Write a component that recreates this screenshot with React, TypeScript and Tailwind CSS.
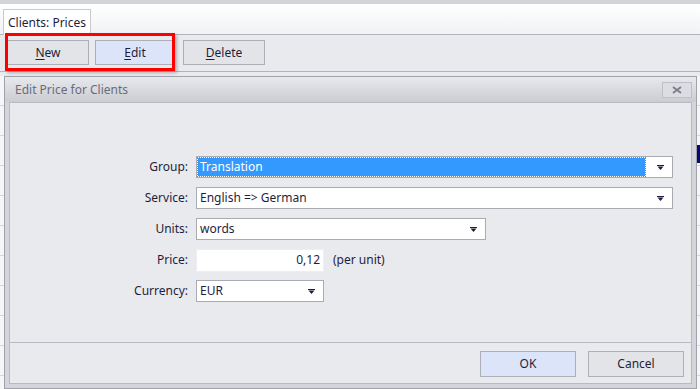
import React from 'react';

const font = { fontFamily: '"Noto Sans", "Open Sans", sans-serif' };

const Arrow: React.FC = () => (
  <svg width="7" height="5" viewBox="0 0 7 5" className="shrink-0">
    <rect x="0" y="0" width="7" height="1" fill="#1e1e3c" />
    <path d="M0.5 1.5 H6.5 L3.5 5 Z" fill="#1e1e3c" />
  </svg>
);

const Btn: React.FC<{ label: string; u?: string; active?: boolean; w: string }> = ({ label, u, active, w }) => (
  <button
    className={`${w} h-[25px] border border-[#adaeb6] text-[12px] text-[#1e1e3c] flex items-center justify-center ${
      active ? 'bg-[#dce4f9]' : 'bg-[#e3e4e8]'
    }`}
  >
    {u ? (
      <span>
        <span className="underline underline-offset-2">{u}</span>
        {label.slice(1)}
      </span>
    ) : (
      label
    )}
  </button>
);

const Row: React.FC<{ label: string; children: React.ReactNode }> = ({ label, children }) => (
  <div className="flex items-center h-[22px]">
    <div className="w-[178px] text-right text-[12px] text-[#1e1e3c]">{label}</div>
    <div className="ml-[8px] flex items-center">{children}</div>
  </div>
);

const Combo: React.FC<{ w: string; text: string; selected?: boolean }> = ({ w, text, selected }) => (
  <div className={`${w} h-[22px] bg-white border border-[#a9aab2] flex items-center pr-[8px]`}>
    {selected ? (
      <div className="flex-1 h-[18px] ml-[1px] mr-[12px] bg-[#3399ff] outline-1 outline-dotted outline-[#b8860b] flex items-center px-[2px] text-white text-[12px]">
        {text}
      </div>
    ) : (
      <div className="flex-1 px-[3px] text-[12px] text-[#1e1e3c]">{text}</div>
    )}
    <Arrow />
  </div>
);

export default function App() {
  return (
    <div className="w-[700px] h-[389px] overflow-hidden bg-[#e9eaee] flex flex-col" style={font}>
      <div className="h-[4px] bg-[#d3d4d8] shrink-0" />
      <div className="h-[31px] shrink-0 bg-gradient-to-b from-white to-[#f1f2f5] border-b border-[#b3b4bb] flex items-end pl-[3px]">
        <div className="h-[26px] mb-[-1px] px-[4px] bg-white border border-[#c9c9ce] border-b-0 flex items-center text-[12px] text-[#1e1e3c]">
          Clients: Prices
        </div>
      </div>
      <div className="relative h-[37px] shrink-0 bg-[#e9eaee] border-b border-[#b3b4bb] flex items-start pt-[5px] pl-[7px]">
        <Btn label="New" u="N" w="w-[82px]" />
        <div className="w-[6px]" />
        <Btn label="Edit" u="E" active w="w-[80px]" />
        <div className="w-[8px]" />
        <Btn label="Delete" u="D" w="w-[82px]" />
        <div className="absolute left-[5px] top-[-2px] w-[170px] h-[38px] border-[3px] border-[#ff0000] shadow-[2px_2px_3px_rgba(0,0,0,0.25)]" />
      </div>
      <div className="flex-1 flex pt-[4px]">
        <div className="w-[4px] bg-[repeating-linear-gradient(to_bottom,#f6f6f8_0px,#f6f6f8_29px,#d6d7db_29px,#d6d7db_30px)]" />
        <div className="flex-1 border border-[#a0a1a9] bg-[#d4d5da] flex flex-col">
          <div className="h-[25px] shrink-0 bg-gradient-to-b from-[#e8e9ed] to-[#cbccd2] flex items-center justify-between pl-[10px] pr-[4px]">
            <span className="text-[12px] text-[#6b6b7b]">Edit Price for Clients</span>
            <div className="w-[30px] h-[16px] border border-[#bfc0c6] bg-[#dcdde2] flex items-center justify-center">
              <svg width="10" height="8" viewBox="0 0 10 8">
                <path d="M1 1 L9 7 M9 1 L1 7" stroke="#7e7f89" strokeWidth="2" />
              </svg>
            </div>
          </div>
          <div className="flex-1 mx-[4px] mb-[4px] border border-[#b9bac1] bg-[#e9eaee] flex flex-col">
            <div className="h-[240px] shrink-0 border-b border-[#b9bac1] pt-[53px] flex flex-col gap-[9px]">
              <Row label="Group:">
                <Combo w="w-[477px]" text="Translation" selected />
              </Row>
              <Row label="Service:">
                <Combo w="w-[477px]" text="English => German" />
              </Row>
              <Row label="Units:">
                <Combo w="w-[290px]" text="words" />
              </Row>
              <Row label="Price:">
                <div className="w-[128px] h-[23px] bg-white border border-[#eeeef1] flex items-center justify-end px-[3px] text-[12px] text-[#1e1e3c]">
                  0,12
                </div>
                <span className="ml-[9px] text-[12px] text-[#1e1e3c]">(per unit)</span>
              </Row>
              <Row label="Currency:">
                <Combo w="w-[128px]" text="EUR" />
              </Row>
            </div>
            <div className="flex-1 flex justify-end items-start pt-[8px] pr-[7px] gap-[12px]">
              <button className="w-[96px] h-[26px] border border-[#adaeb6] bg-[#dce4f9] text-[12px] text-[#1e1e3c]">OK</button>
              <button className="w-[96px] h-[26px] border border-[#adaeb6] bg-[#e3e4e8] text-[12px] text-[#1e1e3c]">Cancel</button>
            </div>
          </div>
        </div>
        <div className="w-[3px] flex flex-col bg-[repeating-linear-gradient(to_bottom,#f6f6f8_0px,#f6f6f8_29px,#d6d7db_29px,#d6d7db_30px)]">
          <div className="h-[69px]" />
          <div className="h-[18px] bg-[#0a0a6e]" />
        </div>
      </div>
    </div>
  );
}
